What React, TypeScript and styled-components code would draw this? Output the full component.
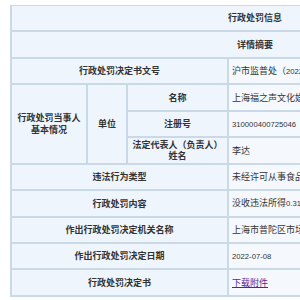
import React from 'react'
import styled, { createGlobalStyle } from 'styled-components'

const GlobalStyle = createGlobalStyle`
	html, body {
		margin: 0;
		overflow: hidden;
		background: #ffffff;
	}
	body {
		padding: 5px 0 0 10px;
		font-family: "Noto Sans CJK SC", "DejaVu Sans", sans-serif;
		font-size: 9px;
		color: #333333;
	}
`

const Table = styled.table`
	width: 490px;
	border-collapse: separate;
	border-spacing: 0;
	border-top: 1px solid #c9d9e6;
	border-left: 2px solid #c9d9e6;
	table-layout: fixed;
`

const Cell = styled.td<{ $label?: boolean; $left?: boolean }>`
	height: 24.45px;
	padding: 0 3px;
	line-height: 11.5px;
	border-right: 2px solid #c9d9e6;
	border-bottom: 2px solid #c9d9e6;
	background: ${(p) => (p.$label ? '#eef5fc' : '#f5f9fe')};
	font-weight: ${(p) => (p.$label ? 700 : 400)};
	text-align: ${(p) => (p.$left ? 'left' : 'center')};
	white-space: nowrap;
	overflow: hidden;
	vertical-align: middle;
`

const Num = styled.span`
	font-family: "Liberation Sans", Arial, sans-serif;
	font-size: 7.7px;
`

const Download = styled.a`
	color: #5b1f95;
	text-decoration: underline;
`

export default function App() {
	return (
		<>
			<GlobalStyle />
			<Table>
				<colgroup>
					<col style={{ width: 76 }} />
					<col style={{ width: 40 }} />
					<col style={{ width: 101 }} />
					<col />
				</colgroup>
				<tbody>
					<tr>
						<Cell $label colSpan={4}>行政处罚信息</Cell>
					</tr>
					<tr>
						<Cell $label colSpan={4}>详情摘要</Cell>
					</tr>
					<tr>
						<Cell $label colSpan={3}>行政处罚决定书文号</Cell>
						<Cell $left>沪市监普处（<Num>2022</Num>）<Num>2902022000912</Num>号</Cell>
					</tr>
					<tr>
						<Cell $label rowSpan={3}>
							行政处罚当事人
							<br />
							基本情况
						</Cell>
						<Cell $label rowSpan={3}>单位</Cell>
						<Cell $label>名称</Cell>
						<Cell $left>上海福之声文化娱乐有限公司</Cell>
					</tr>
					<tr>
						<Cell $label>注册号</Cell>
						<Cell $left>
							<Num>310000400725046</Num>
						</Cell>
					</tr>
					<tr>
						<Cell $label>
							法定代表人（负责人）
							<br />
							姓名
						</Cell>
						<Cell $left>李达</Cell>
					</tr>
					<tr>
						<Cell $label colSpan={3}>违法行为类型</Cell>
						<Cell $left>未经许可从事食品经营活动</Cell>
					</tr>
					<tr>
						<Cell $label colSpan={3}>行政处罚内容</Cell>
						<Cell $left>
							没收违法所得<Num>0.3108</Num>万元，罚款
						</Cell>
					</tr>
					<tr>
						<Cell $label colSpan={3}>作出行政处罚决定机关名称</Cell>
						<Cell $left>上海市普陀区市场监督管理局</Cell>
					</tr>
					<tr>
						<Cell $label colSpan={3}>作出行政处罚决定日期</Cell>
						<Cell $left>
							<Num>2022-07-08</Num>
						</Cell>
					</tr>
					<tr>
						<Cell $label colSpan={3}>行政处罚决定书</Cell>
						<Cell $left>
							<Download href="#">下载附件</Download>
						</Cell>
					</tr>
				</tbody>
			</Table>
		</>
	)
}
